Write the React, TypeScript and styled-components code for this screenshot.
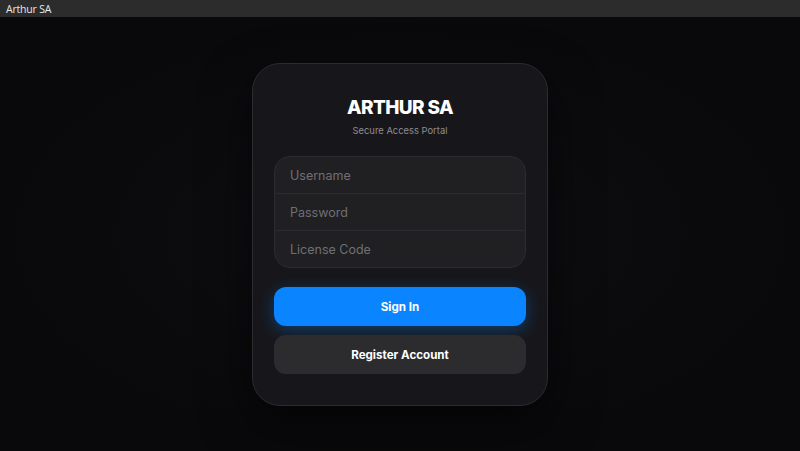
import React, { FC } from 'react'
import styled, { createGlobalStyle } from 'styled-components'

const GlobalStyle = createGlobalStyle`
	html, body {
		margin: 0;
		padding: 0;
		background: #0b0b0e;
	}
	* { box-sizing: border-box; }
`

const Window = styled.div`
	width: 800px;
	height: 451px;
	display: flex;
	flex-direction: column;
	background: #0b0b0e;
	font-family: Inter, 'Liberation Sans', sans-serif;
	overflow: hidden;
`

const TitleBar = styled.div`
	height: 17px;
	flex: none;
	display: flex;
	align-items: center;
	padding-left: 6px;
	background: #2c2c2c;
	color: #e8e8e8;
	font-family: 'Open Sans', 'Liberation Sans', sans-serif;
	font-size: 10.5px;
	letter-spacing: -0.2px;
`

const Stage = styled.div`
	flex: 1;
	display: flex;
	justify-content: center;
	align-items: flex-start;
	padding-top: 46px;
	background: radial-gradient(ellipse at center, #0f0f12 0%, #09090b 70%);
`

const Card = styled.div`
	width: 296px;
	height: 343px;
	display: flex;
	flex-direction: column;
	padding: 31px 21px 0;
	background: #17171b;
	border: 1px solid #2b2b30;
	border-radius: 28px;
	box-shadow: 0 20px 50px rgba(0, 0, 0, 0.6);
`

const Header = styled.div`
	display: flex;
	flex-direction: column;
	align-items: center;
`

const Title = styled.h1`
	margin: 0;
	font-size: 19px;
	line-height: 26px;
	font-weight: 800;
	letter-spacing: -0.6px;
	color: #ffffff;
`

const Subtitle = styled.div`
	margin-top: 3px;
	font-size: 9.4px;
	line-height: 14px;
	color: #8e8e93;
`

const FieldGroup = styled.div`
	margin-top: 18px;
	display: flex;
	flex-direction: column;
	background: #202023;
	border: 1px solid #2c2c30;
	border-radius: 16px;
	overflow: hidden;
`

const Field = styled.input`
	height: 37px;
	border: none;
	border-top: 1px solid #2b2b2f;
	background: transparent;
	padding: 0 15px;
	font-family: Inter, 'Liberation Sans', sans-serif;
	font-size: 12.5px;
	color: #fff;
	outline: none;
	&:first-child { border-top: none; height: 36px; }
	&::placeholder { color: #6f6f74; }
`

const Button = styled.button<{ $primary?: boolean }>`
	height: 39px;
	border: none;
	border-radius: 12px;
	font-family: Inter, 'Liberation Sans', sans-serif;
	font-size: 11.6px;
	font-weight: 700;
	color: #ffffff;
	background: ${({ $primary }) => ($primary ? '#0a84ff' : '#2c2c2f')};
	box-shadow: ${({ $primary }) => ($primary ? '0 4px 16px rgba(10, 132, 255, 0.35)' : 'none')};
	margin-top: ${({ $primary }) => ($primary ? '19px' : '9px')};
	cursor: pointer;
`

export const LoginCard: FC = () => (
	<Card>
		<Header>
			<Title>ARTHUR SA</Title>
			<Subtitle>Secure Access Portal</Subtitle>
		</Header>
		<FieldGroup>
			<Field placeholder="Username" />
			<Field placeholder="Password" type="password" />
			<Field placeholder="License Code" />
		</FieldGroup>
		<Button $primary>Sign In</Button>
		<Button>Register Account</Button>
	</Card>
)

export default function App() {
	return <>
		<GlobalStyle />
		<Window>
			<TitleBar>Arthur SA</TitleBar>
			<Stage>
				<LoginCard />
			</Stage>
		</Window>
	</>
}
